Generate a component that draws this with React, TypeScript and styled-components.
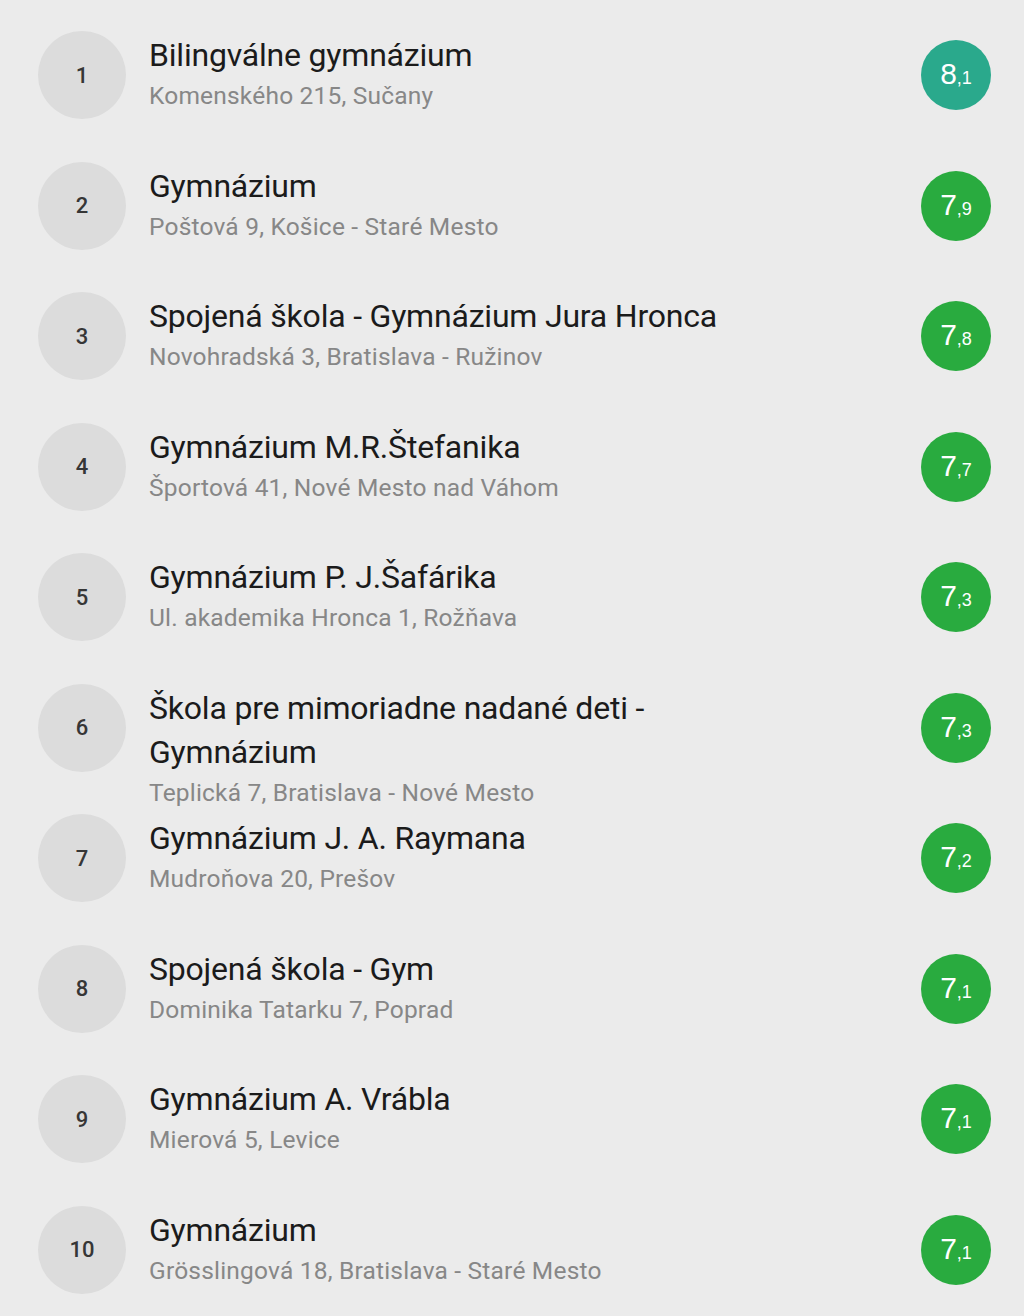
import React from 'react'
import styled, { createGlobalStyle } from 'styled-components'

const GlobalStyle = createGlobalStyle`
  html, body {
    margin: 0;
    padding: 0;
    background: #ebebeb;
  }
  body {
    font-family: Roboto, 'Noto Sans', 'Liberation Sans', sans-serif;
  }
`

type School = {
  name: string
  address: string
  score: [string, string]
  top?: boolean
}

const schools: School[] = [
  { name: 'Bilingválne gymnázium', address: 'Komenského 215, Sučany', score: ['8', '1'], top: true },
  { name: 'Gymnázium', address: 'Poštová 9, Košice - Staré Mesto', score: ['7', '9'] },
  { name: 'Spojená škola - Gymnázium Jura Hronca', address: 'Novohradská 3, Bratislava - Ružinov', score: ['7', '8'] },
  { name: 'Gymnázium M.R.Štefanika', address: 'Športová 41, Nové Mesto nad Váhom', score: ['7', '7'] },
  { name: 'Gymnázium P. J.Šafárika', address: 'Ul. akademika Hronca 1, Rožňava', score: ['7', '3'] },
  { name: 'Škola pre mimoriadne nadané deti - Gymnázium', address: 'Teplická 7, Bratislava - Nové Mesto', score: ['7', '3'] },
  { name: 'Gymnázium J. A. Raymana', address: 'Mudroňova 20, Prešov', score: ['7', '2'] },
  { name: 'Spojená škola - Gym', address: 'Dominika Tatarku 7, Poprad', score: ['7', '1'] },
  { name: 'Gymnázium A. Vrábla', address: 'Mierová 5, Levice', score: ['7', '1'] },
  { name: 'Gymnázium', address: 'Grösslingová 18, Bratislava - Staré Mesto', score: ['7', '1'] },
]

const List = styled.ol`
  list-style: none;
  margin: 0;
  padding: 10px 33px 0 38px;
  width: 1024px;
  height: 1316px;
  box-sizing: border-box;
  overflow: hidden;
`

const Row = styled.li`
  display: flex;
  align-items: center;
  height: 130.5px;
`

const Rank = styled.div`
  flex: none;
  width: 88px;
  height: 88px;
  border-radius: 50%;
  background: #dcdcdc;
  color: #363636;
  font-size: 22px;
  font-weight: 500;
  display: flex;
  align-items: center;
  justify-content: center;
`

// text block hangs from the top of the row; long names may spill into the next row
const Info = styled.div`
  flex: 1;
  align-self: flex-start;
  padding: 23px 0 0 23px;
  max-width: 600px;
`

const Name = styled.div`
  color: #1b1b1b;
  font-size: 32px;
  line-height: 44px;
  letter-spacing: -0.2px;
`

const Address = styled.div`
  color: #878787;
  font-size: 24.5px;
  line-height: 38px;
  letter-spacing: 0.2px;
`

const Score = styled.div<{ $top?: boolean }>`
  flex: none;
  margin-left: auto;
  width: 70px;
  height: 70px;
  border-radius: 50%;
  background: ${p => (p.$top ? '#2aa98c' : '#29ab3f')};
  color: #fff;
  display: flex;
  align-items: baseline;
  justify-content: center;
  padding-top: 19px;
  box-sizing: border-box;
  font-family: 'Liberation Sans', Arial, sans-serif;
  line-height: 1;
`

const Whole = styled.span`
  font-size: 30px;
`

const Fraction = styled.span`
  font-size: 18px;
`

export default function App() {
  return (
    <>
      <GlobalStyle />
      <List>
        {schools.map((s, i) => (
          <Row key={i}>
            <Rank>{i + 1}</Rank>
            <Info>
              <Name>{s.name}</Name>
              <Address>{s.address}</Address>
            </Info>
            <Score $top={s.top}>
              <Whole>{s.score[0]}</Whole>
              <Fraction>,{s.score[1]}</Fraction>
            </Score>
          </Row>
        ))}
      </List>
    </>
  )
}
